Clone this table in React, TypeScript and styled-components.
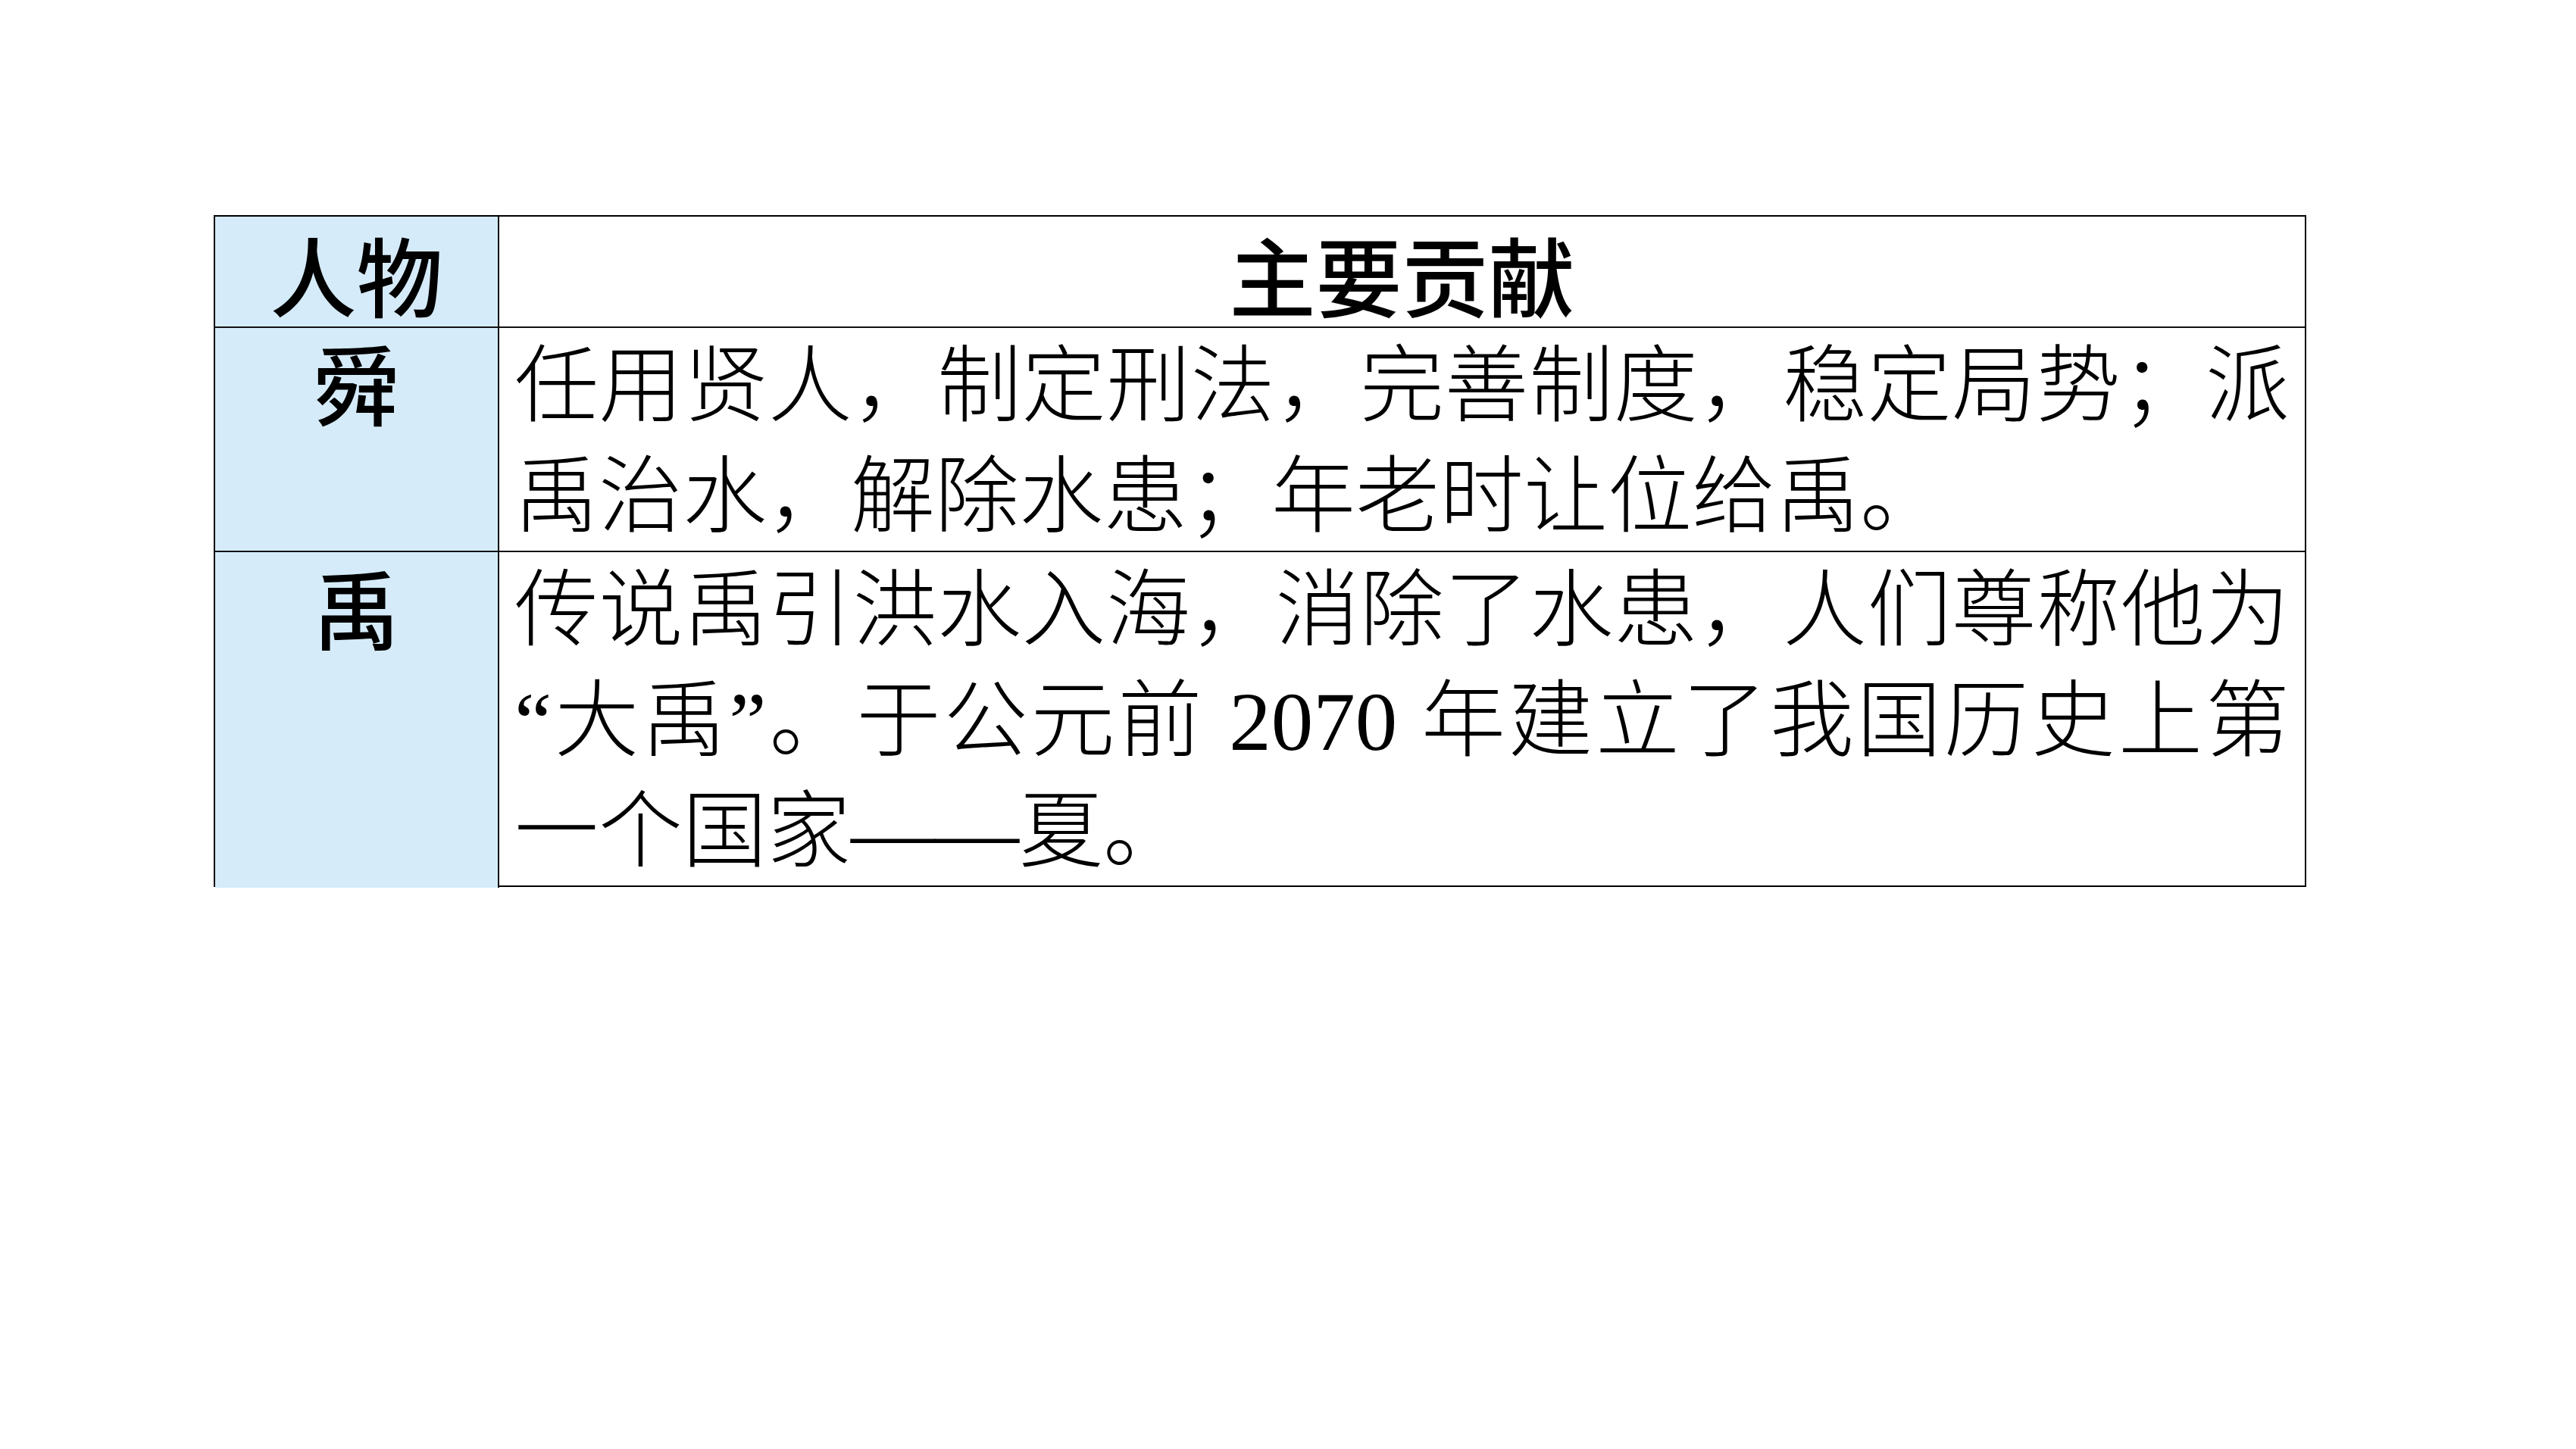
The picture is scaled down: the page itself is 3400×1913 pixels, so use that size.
import { Fragment } from "react";
import styled, { createGlobalStyle } from "styled-components";

const GlobalStyle = createGlobalStyle`
  html, body {
    margin: 0;
    padding: 0;
    background: #ffffff;
  }
  body {
    width: 3400px;
    height: 1913px;
    overflow: hidden;
  }
  * {
    box-sizing: border-box;
  }
`;

const rows = [
  {
    name: "舜",
    lines: [
      { text: "任用贤人，制定刑法，完善制度，稳定局势；派", full: true },
      { text: "禹治水，解除水患；年老时让位给禹。", full: false },
    ],
  },
  {
    name: "禹",
    lines: [
      { text: "传说禹引洪水入海，消除了水患，人们尊称他为", full: true },
      { text: "“大禹”。于公元前 2070 年建立了我国历史上第", full: true },
      { text: "一个国家——夏。", full: false },
    ],
  },
];

const App = () => {
  return (
    <Page>
      <GlobalStyle />
      <Table>
        <HeadCell $blue>人物</HeadCell>
        <HeadCell>主要贡献</HeadCell>
        {rows.map((row, i) => {
          const last = i === rows.length - 1;
          return (
            <Fragment key={row.name}>
              <NameCell $last={last}>{row.name}</NameCell>
              <TextCell $last={last}>
                {row.lines.map((line) => (
                  <Line key={line.text} $full={line.full}>
                    {line.text}
                  </Line>
                ))}
              </TextCell>
            </Fragment>
          );
        })}
      </Table>
    </Page>
  );
};

const Page = styled.div`
  padding: 284px 0 0 282px;
`;

const Table = styled.div`
  width: 2762px;
  height: 887px;
  border: 2px solid #000;
  display: grid;
  grid-template-columns: 375px 1fr;
  grid-template-rows: 147px 296px 1fr;
`;

const HeadCell = styled.div<{ $blue?: boolean }>`
  display: flex;
  align-items: center;
  justify-content: center;
  background: ${(p) => (p.$blue ? "#d5ebf9" : "#ffffff")};
  border-bottom: 2px solid #111;
  border-right: ${(p) => (p.$blue ? "2px solid #111" : "none")};
  font-family: "Noto Sans CJK SC", "Noto Sans", sans-serif;
  font-weight: 500;
  font-size: 114px;
  line-height: 1;
  color: #000;
  padding-top: 4px;
`;

const NameCell = styled.div<{ $last: boolean }>`
  background: #d5ebf9;
  border-right: 2px solid #111;
  border-bottom: ${(p) => (p.$last ? "none" : "2px solid #111")};
  text-align: center;
  font-family: "Noto Sans CJK SC", "Noto Sans", sans-serif;
  font-weight: 500;
  font-size: 114px;
  line-height: 142px;
  color: #000;
`;

const TextCell = styled.div<{ $last: boolean }>`
  border-bottom: ${(p) => (p.$last ? "none" : "2px solid #111")};
  padding: 5px 20px 0 20px;
  font-family: "Liberation Serif", "Noto Sans CJK SC", serif;
  font-weight: 300;
  font-size: 111px;
  line-height: 146px;
  color: #000;
`;

const Line = styled.div<{ $full: boolean }>`
  text-align: justify;
  text-align-last: ${(p) => (p.$full ? "justify" : "left")};
  text-justify: inter-character;
`;

export default App;
